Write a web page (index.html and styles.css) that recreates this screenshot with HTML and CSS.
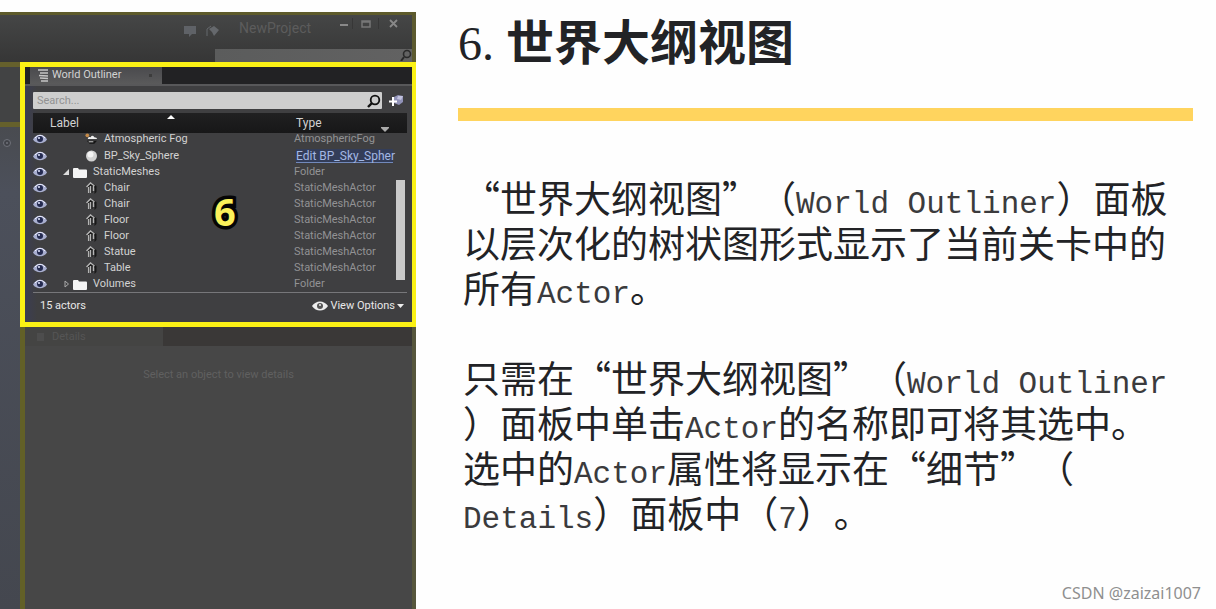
FILE: index.html
```html
<!DOCTYPE html>
<html lang="zh-CN">
<head>
<meta charset="utf-8">
<title>世界大纲视图</title>
<link rel="stylesheet" href="styles.css">
</head>
<body>
<svg class="defs" aria-hidden="true">
  <symbol id="eye" viewBox="0 0 14 10"><path d="M0 5.500C3-.8 11-.8 14 5.500 11 10.600 3 10.600 0 5.500z" fill="#a9afd0"/><path d="M2 4C5 .5 9 .5 12 4" stroke="#eef" fill="none"/><circle cx="7" cy="5" r="3" fill="#252b50"/><circle cx="6" cy="4" r="1" fill="#e4e8ff"/></symbol>
  <symbol id="folder" viewBox="0 0 14 11"><path d="M0 2q0-1 1-1h4l1 1.500h7q1 0 1 1V10q0 1-1 1H1q-1 0-1-1z" fill="#f4f4f4"/></symbol>
  <symbol id="mesh" viewBox="0 0 12 12"><path d="M6 1l5 3v6l-2 2V6L7 5v6H5V6L4 7v4H2V6L1 5z" fill="#181818"/><path d="M1 5l4-4 4 3M3 5v6M5 4v7M8 4v5" stroke="#b4b4b4" stroke-width="1.400" fill="none"/></symbol>
</svg>
<main class="slide">
  <section class="editor">
    <header class="titlebar">
      <div class="title-row">
        <svg class="i-chat" viewBox="0 0 12 12"><path d="M0 1h12v8H8l-3 3V9H0z" fill="#5f6267"/></svg>
        <svg class="i-cap" viewBox="0 0 14 12"><path d="M1 11V4l4-3" stroke="#65686c" fill="none"/><path d="M3 4l5-3 5 4-5 6-2-4z" fill="#65686c"/></svg>
        <span class="project">NewProject</span>
        <svg class="i-win" viewBox="0 0 64 12"><path d="M2 7h8" stroke="#898989" stroke-width="2"/><path d="M24 3h8v6h-8zM24 4h8" stroke="#777" stroke-width="1.500" fill="none"/><path d="M52 2l7 7M59 2l-7 7" stroke="#888" stroke-width="1.800"/><path d="M14.500 0v11M40.500 0v11" stroke="#373737"/></svg>
      </div>
      <div class="help-search"><svg viewBox="0 0 12 12"><circle cx="7" cy="5" r="3.500" stroke="#292929" stroke-width="1.600" fill="none"/><path d="M4 8l-3 4" stroke="#292929" stroke-width="2"/></svg></div>
    </header>
    <div class="body">
      <div class="strip"><div class="strip-box"></div><svg class="strip-dot" viewBox="0 0 10 10"><circle cx="5" cy="5" r="3.500" stroke="#6f727a" fill="#404248"/><circle cx="5" cy="5" r="1" fill="#6f727a"/></svg></div>
      <div class="docks">
        <section class="outliner">
          <div class="tabs"><div class="tab"><svg viewBox="0 0 12 13"><path d="M1 1h10M3 4h8M2 6.500l9 .5M3 9l8 .5M4 12h7" stroke="#c5c5c5" stroke-width="1.500"/></svg><span>World Outliner</span><i class="tab-x"></i></div></div>
          <div class="panel">
            <div class="search-row">
              <label class="search"><input type="text" placeholder="Search..." aria-label="Search"><svg viewBox="0 0 14 14"><circle cx="8" cy="6" r="4.300" stroke="#111" stroke-width="1.800" fill="none"/><path d="M5 9l-4 4" stroke="#111" stroke-width="2.400"/></svg></label>
              <button class="add" aria-label="Add"><svg viewBox="0 0 16 14"><path d="M6 3l4-2 5 1v6l-4 3-5-2z" fill="#9192b8"/><path d="M10 2l5 0-2 4-4-1z" fill="#c1c1dd"/><path d="M5 3v9M1 7.500h8" stroke="#fff" stroke-width="2"/></svg></button>
            </div>
            <div class="list">
              <table>
                <colgroup><col class="c-eye"><col><col class="c-type"></colgroup>
                <thead><tr><th colspan="2" class="h-label">Label<svg class="sort" viewBox="0 0 8 4"><path d="M0 4l4-4 4 4z" fill="#fff"/></svg></th><th>Type<svg class="more" viewBox="0 0 8 5"><path d="M0 0h8v1L4 5 0 1z" fill="#aaa"/></svg></th></tr></thead>
                <tbody>
                  <tr class="cut"><td><svg class="eye"><use href="#eye"/></svg></td><td><div class="item child"><svg viewBox="0 0 14 12"><circle cx="2.500" cy="2" r="2" fill="#c58a48"/><path d="M3 6q0-3 3-2 2-3 4 0 3 0 3 2z" fill="#eee"/><path d="M2 8h11l-3 3H5z" fill="#151515"/><path d="M4 9h5" stroke="#ddd"/></svg>Atmospheric Fog</div></td><td>AtmosphericFog</td></tr>
                  <tr><td><svg class="eye"><use href="#eye"/></svg></td><td><div class="item child"><svg viewBox="0 0 12 12"><circle cx="6" cy="6" r="5.500" fill="#d2d2d2"/><circle cx="5" cy="4.500" r="3" fill="#f3f3f3"/></svg>BP_Sky_Sphere</div></td><td><a href="#">Edit BP_Sky_Spher</a></td></tr>
                  <tr><td><svg class="eye"><use href="#eye"/></svg></td><td><div class="item folder"><svg class="arrow" viewBox="0 0 7 8"><path d="M6 1v6H0z" fill="#ddd"/></svg><svg><use href="#folder"/></svg>StaticMeshes</div></td><td>Folder</td></tr>
                  <tr><td><svg class="eye"><use href="#eye"/></svg></td><td><div class="item child"><svg><use href="#mesh"/></svg>Chair</div></td><td>StaticMeshActor</td></tr>
                  <tr><td><svg class="eye"><use href="#eye"/></svg></td><td><div class="item child"><svg><use href="#mesh"/></svg>Chair</div></td><td>StaticMeshActor</td></tr>
                  <tr><td><svg class="eye"><use href="#eye"/></svg></td><td><div class="item child"><svg><use href="#mesh"/></svg>Floor</div></td><td>StaticMeshActor</td></tr>
                  <tr><td><svg class="eye"><use href="#eye"/></svg></td><td><div class="item child"><svg><use href="#mesh"/></svg>Floor</div></td><td>StaticMeshActor</td></tr>
                  <tr><td><svg class="eye"><use href="#eye"/></svg></td><td><div class="item child"><svg><use href="#mesh"/></svg>Statue</div></td><td>StaticMeshActor</td></tr>
                  <tr><td><svg class="eye"><use href="#eye"/></svg></td><td><div class="item child"><svg><use href="#mesh"/></svg>Table</div></td><td>StaticMeshActor</td></tr>
                  <tr><td><svg class="eye"><use href="#eye"/></svg></td><td><div class="item folder"><svg class="arrow" viewBox="0 0 7 8"><path d="M2 1l3.500 3L2 7z" fill="none" stroke="#aaa"/></svg><svg><use href="#folder"/></svg>Volumes</div></td><td>Folder</td></tr>
                </tbody>
              </table>
              <div class="thumb"></div>
              <div class="badge">6</div>
            </div>
            <footer class="status"><span>15 actors</span><button class="view"><svg viewBox="0 0 16 10"><path d="M0 5C4-1 12-1 16 5 12 11 4 11 0 5z" fill="#eee"/><circle cx="8" cy="5" r="3" fill="#555"/><circle cx="8" cy="4" r="1" fill="#eee"/></svg>View Options<svg class="caret" viewBox="0 0 7 4"><path d="M0 0h7L3.500 4z" fill="#eee"/></svg></button></footer>
          </div>
        </section>
        <section class="details">
          <div class="d-tabs"><div class="d-tab"><i></i>Details</div></div>
          <p>Select an object to view details</p>
        </section>
      </div>
    </div>
  </section>
  <article class="notes">
    <h1><span>6. </span>世界大纲视图</h1>
    <hr>
    <div class="text">
      <p>“世界大纲视图”（<span>World Outliner</span>）面板<br>以层次化的树状图形式显示了当前关卡中的<br>所有<span>Actor</span>。</p>
      <p>只需在“世界大纲视图”（<span>World Outliner</span><br>）面板中单击<span>Actor</span>的名称即可将其选中。<br>选中的<span>Actor</span>属性将显示在“细节”（<br><span>Details</span>）面板中（<span>7</span>）。</p>
    </div>
    <footer class="mark">CSDN @zaizai1007</footer>
  </article>
</main>
</body>
</html>
```
FILE: styles.css
```css
* { box-sizing: border-box; }
body { margin: 0; background: #fefefe; color: #222326; font-family: "Noto Sans CJK SC", sans-serif; }
p, h1 { margin: 0; }
svg { display: block; flex: none; }
button { border: 0; padding: 0; background: none; color: inherit; font: inherit; }
.defs { position: absolute; width: 0; height: 0; }
.slide { display: grid; grid-template-columns: 416px minmax(0, 1fr); min-height: 100vh; }

.editor { margin-top: 12px; display: flex; flex-direction: column; background: #474747; font-family: Roboto, sans-serif; font-size: 11px; line-height: 16px; }
.titlebar { height: 50px; border-top: 3px solid #5e5b2b; border-right: 4px solid #5c5a2f; background: linear-gradient(#454646, #363636); display: flex; flex-direction: column; justify-content: space-between; }
.title-row { display: flex; align-items: center; height: 26px; padding-left: 184px; }
.i-chat { width: 12px; height: 12px; margin-top: 6px; }
.i-cap { width: 14px; height: 12px; margin: 6px 0 0 10px; }
.project { margin-left: 19px; font-size: 14px; color: #5c5c5c; }
.i-win { width: 64px; height: 12px; margin: 0 10px 8px auto; }
.help-search { height: 13px; margin-left: 215px; background: linear-gradient(90deg, #5b5c5c, #626262); display: flex; justify-content: flex-end; }
.help-search svg { width: 12px; height: 12px; }
.body { flex: 1; display: flex; }
.strip { width: 20px; background: linear-gradient(#494b50 65px, #4c505b 130px, #44474f); }
.strip-box { height: 65px; border: solid #65602c; border-width: 5px 0; background: #424344; }
.strip-dot { width: 10px; height: 10px; margin: 11px 0 0 2px; }
.docks { flex: 1; display: flex; flex-direction: column; }

.outliner { border: 5px solid #fbf115; border-right-width: 4px; background: #3f3f41; color: #d2d2d2; }
.tabs { height: 17px; padding-left: 5px; background: #222224; }
.tab { width: 132px; height: 17px; padding-left: 7px; display: flex; align-items: center; gap: 3px; background: linear-gradient(#4a4a4d, #5a5a5b); line-height: 14px; }
.tab svg { width: 12px; height: 13px; }
.tab span { margin-top: -2px; }
.tab-x { width: 3px; height: 3px; margin-left: auto; margin-right: 10px; background: #3c3c3c; }
.panel { border-top: 2px solid #58585a; padding: 6px 5px 0 0; background: linear-gradient(90deg, #3b3d52, #3f3f41 12px); }
.search-row { display: flex; align-items: center; gap: 6px; padding-left: 8px; height: 17px; }
.search { flex: 1; display: flex; align-items: center; height: 17px; padding: 0 1px 0 4px; background: #cecece; border-radius: 1px; }
.search input { flex: 1; min-width: 0; height: 16px; border: 0; padding: 0; background: none; font: 11px/16px Roboto, sans-serif; outline: 0; }
.search input::placeholder { color: #929292; opacity: 1; }
.search svg { width: 14px; height: 14px; }
.add, .add svg { width: 16px; height: 14px; }
.add { margin-right: 3px; }
.list { position: relative; margin: 4px 0 0 8px; border-bottom: 1px solid #77777a; }
table { width: 100%; border-collapse: collapse; table-layout: fixed; }
.c-eye { width: 27px; }
.c-type { width: 113px; }
th, td { padding: 0; text-align: left; vertical-align: middle; }
thead tr { height: 20px; background: linear-gradient(#202021, #171718); }
th { position: relative; padding-left: 2px; font-size: 12px; font-weight: 400; }
.h-label { padding-left: 17px; }
.sort { position: absolute; left: 134px; top: 2px; width: 8px; height: 4px; }
.more { position: absolute; right: 18px; bottom: 1px; width: 8px; height: 5px; }
tbody tr { height: 16px; }
tbody td:last-child { color: #929294; white-space: nowrap; }
tbody td { height: 16px; line-height: 16px; }
tbody .cut, .cut td { height: 15px; line-height: 12px; vertical-align: top; }
.cut .item { height: 12px; }
.cut .eye { margin-top: 1px; }
.eye { width: 14px; height: 10px; }
.item { display: flex; align-items: center; height: 16px; }
.child { padding-left: 25px; gap: 6px; }
.child svg { width: 13px; height: 12px; }
.folder { padding-left: 3px; }
.folder svg { width: 14px; height: 11px; margin-right: 6px; }
.folder .arrow { width: 7px; height: 8px; margin-right: 3px; }
td a { display: block; width: 97px; margin-left: 2px; height: 14px; line-height: 14px; font-size: 12px; color: #a3b8e4; background: #333d59; text-decoration: none; border-bottom: 1px solid #7289bb; }
.thumb { position: absolute; right: 2px; top: 67px; bottom: 12px; width: 9px; background: #cbcbcb; }
.badge { position: absolute; left: 181px; top: 76px; font: 700 38px/44px "Open Sans", sans-serif; color: #fbf15a; -webkit-text-stroke: 7px #050505; paint-order: stroke; }
.status { height: 29px; padding: 0 3px 4px 15px; display: flex; align-items: center; justify-content: space-between; color: #e8e8e8; }
.view { display: flex; align-items: center; gap: 2px; }
.view svg { width: 16px; height: 10px; }
.view .caret { width: 7px; height: 4px; }

.details { flex: 1; border-left: 5px solid #626027; border-right: 4px solid #56563c; background: #474747; }
.d-tabs { height: 19px; background: #3a3837; }
.d-tab { width: 138px; height: 19px; padding-left: 12px; display: flex; align-items: center; gap: 8px; background: #444443; color: #555; }
.d-tab i { width: 7px; height: 8px; background: #4d4d4d; }
.details p { margin-top: 21px; text-align: center; color: #606060; }

.notes { display: flex; flex-direction: column; padding: 3px 23px 6px 42px; }
.notes h1 { font-size: 48px; line-height: 72px; font-weight: 700; white-space: pre; }
.notes h1 span { font-family: "Liberation Serif", serif; font-weight: 400; }
.notes hr { width: 100%; height: 13px; margin: 28px 0 0; border: 0; background: #ffd45e; }
.text { margin: 54px 0 0 5px; font-size: 37px; line-height: 45px; white-space: nowrap; text-spacing-trim: space-all; }
.text p + p { margin-top: 45px; }
.text span { font: 31px/1 "Liberation Mono", monospace; color: #3b3b3d; }
.mark { margin: auto -8px 0 0; text-align: right; font: 16px/20px "Noto Sans", sans-serif; color: #8f8f8f; }
```
